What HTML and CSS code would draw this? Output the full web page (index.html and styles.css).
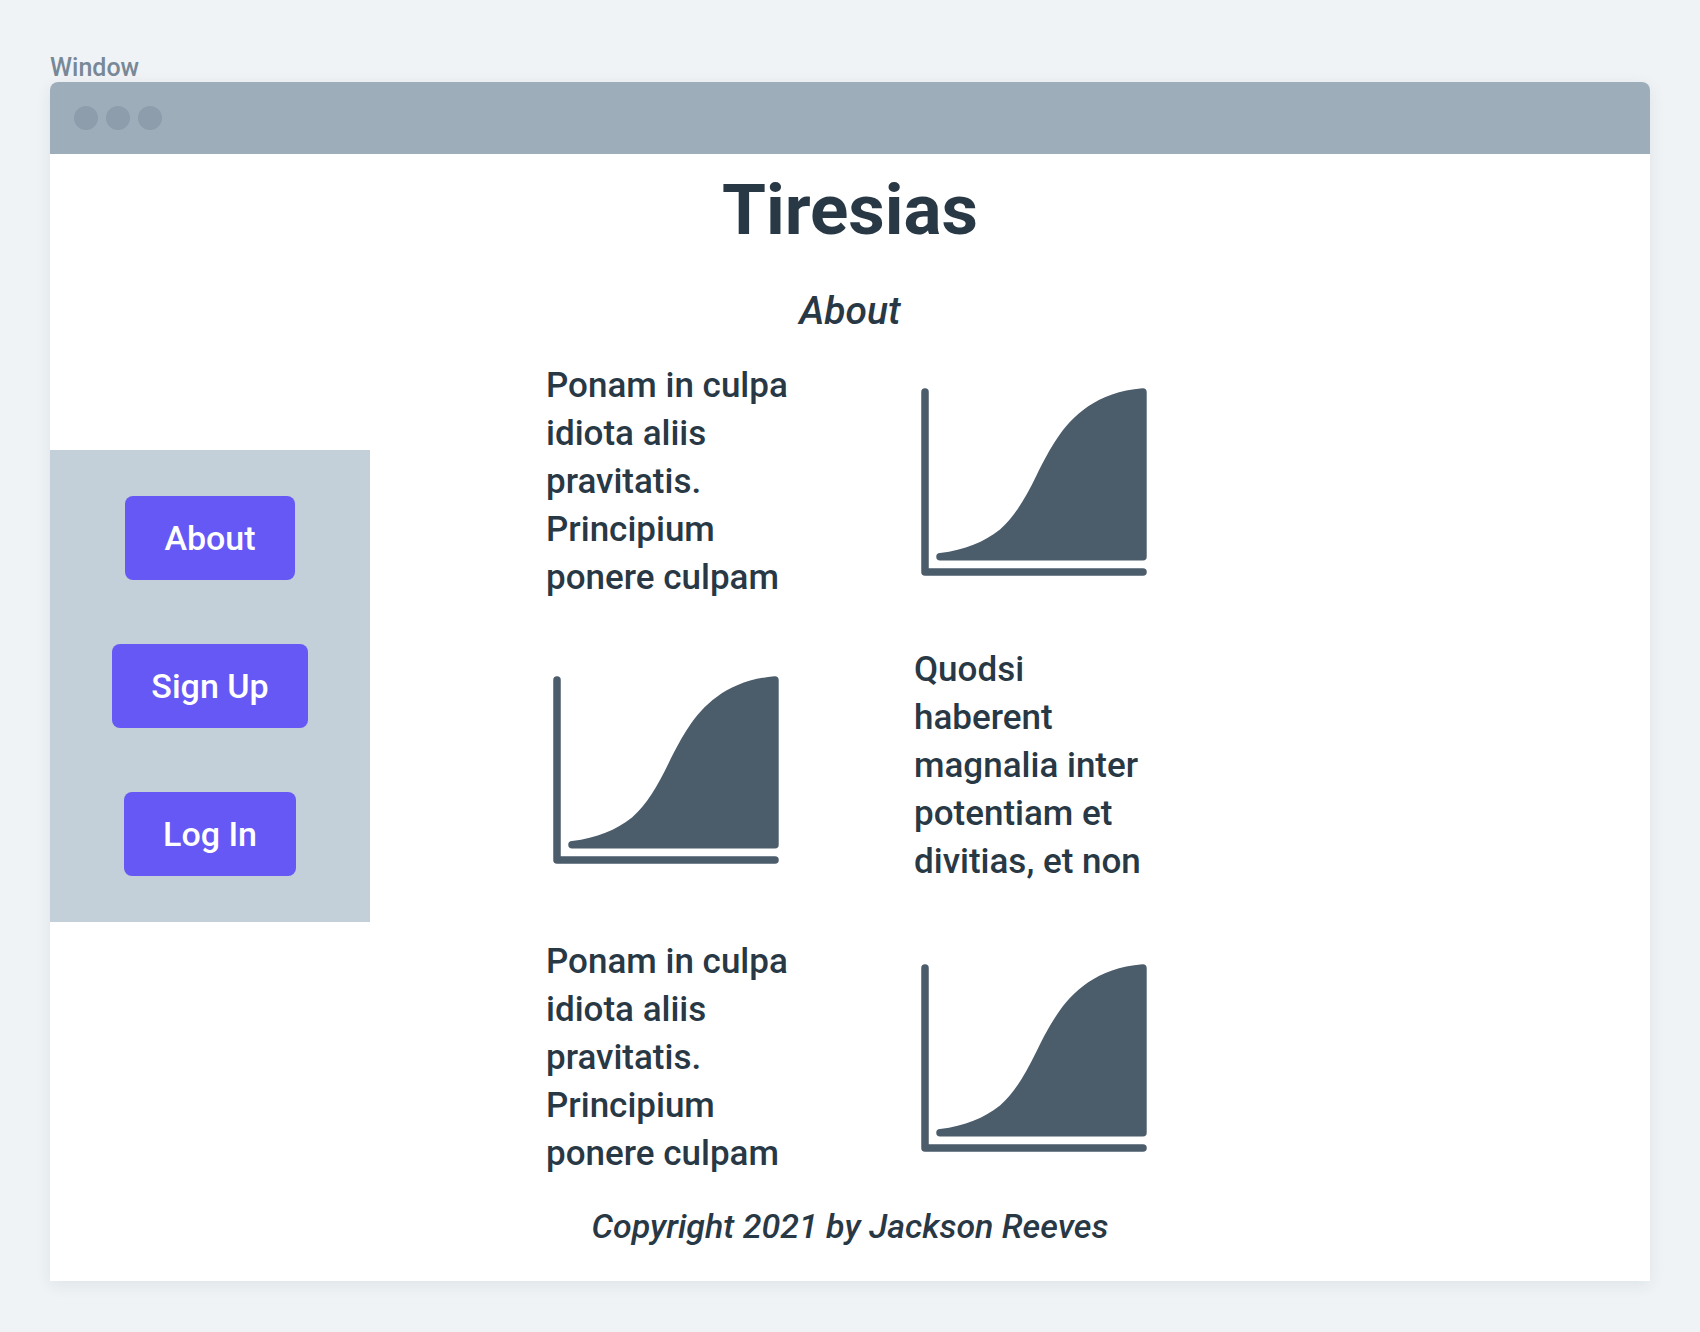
FILE: index.html
```html
<!DOCTYPE html>
<html lang="en">
<head>
  <meta charset="utf-8">
  <title>Tiresias</title>
  <link rel="stylesheet" href="styles.css">
</head>
<body>
  <svg class="defs" aria-hidden="true">
    <symbol id="area-chart" viewBox="0 0 240 240">
      <path d="M11 30V210H229" fill="none" stroke="currentColor" stroke-width="7.5" stroke-linecap="round" stroke-linejoin="round"/>
      <path fill="currentColor" d="M26 191C51 188 70 180 86 167.500C101 154 111 137 122.700 113C130 98 136 87 142.700 77C158 54 183 30 228.500 26.300A4 4 0 0 1 232.700 30V194.700A3.800 3.800 0 0 1 229 198.500H26A3.750 3.750 0 0 1 26 191Z"/>
    </symbol>
  </svg>
  <div class="label">Window</div>
  <div class="window">
    <div class="titlebar">
      <span class="dot"></span>
      <span class="dot"></span>
      <span class="dot"></span>
    </div>
    <div class="page">
      <nav class="sidebar" aria-label="Main">
        <button class="button" type="button">About</button>
        <button class="button" type="button">Sign Up</button>
        <button class="button" type="button">Log In</button>
      </nav>
      <main class="content">
        <h1 class="title">Tiresias</h1>
        <h2 class="subtitle">About</h2>
        <section class="feature">
          <p class="copy">Ponam in culpa<br>idiota aliis<br>pravitatis.<br>Principium<br>ponere culpam</p>
          <svg class="chart" role="img" aria-label="Area chart"><use href="#area-chart"/></svg>
        </section>
        <section class="feature feature-bottom">
          <svg class="chart" role="img" aria-label="Area chart"><use href="#area-chart"/></svg>
          <p class="copy">Quodsi<br>haberent<br>magnalia inter<br>potentiam et<br>divitias, et non</p>
        </section>
        <section class="feature">
          <p class="copy">Ponam in culpa<br>idiota aliis<br>pravitatis.<br>Principium<br>ponere culpam</p>
          <svg class="chart" role="img" aria-label="Area chart"><use href="#area-chart"/></svg>
        </section>
        <footer class="footer">Copyright 2021 by Jackson Reeves</footer>
      </main>
    </div>
  </div>
</body>
</html>
```
FILE: styles.css
```css
* {
  box-sizing: border-box;
}

body {
  margin: 0;
  padding: 54px 50px 48px;
  background: #eff3f6;
  color: #293845;
  font-family: Roboto, "Liberation Sans", sans-serif;
  font-size: 34px;
  font-weight: 500;
  line-height: 48px;
}

.defs {
  position: absolute;
  width: 0;
  height: 0;
}

.label {
  color: #788896;
  font-size: 25px;
  line-height: 28px;
}

.window {
  background: #fff;
  border-radius: 8px 8px 0 0;
  box-shadow: 0 4px 16px rgba(41, 56, 69, 0.08);
}

.titlebar {
  display: flex;
  align-items: center;
  gap: 8px;
  height: 72px;
  padding: 0 24px;
  background: #9eadba;
  border-radius: 8px 8px 0 0;
}

.dot {
  width: 24px;
  height: 24px;
  border-radius: 50%;
  background: #8d9dac;
}

.page {
  display: grid;
  grid-template-columns: 320px 1fr 320px;
  align-items: start;
}

.sidebar {
  display: flex;
  flex-direction: column;
  align-items: center;
  gap: 64px;
  margin-top: 296px;
  padding: 46px 0;
  background: #c3cfd9;
}

.button {
  padding: 18px 39px;
  border: 0;
  border-radius: 8px;
  background: #6558f5;
  color: #fff;
  font: inherit;
}

.content {
  display: flex;
  flex-direction: column;
  align-items: center;
  padding: 16px 0 31px;
}

.title {
  margin: 0;
  font-size: 71px;
  font-weight: 700;
  line-height: 80px;
}

.subtitle {
  margin: 37px 0 27px;
  font-size: 39px;
  font-style: italic;
  font-weight: 500;
}

.feature {
  display: grid;
  grid-template-columns: 240px 240px;
  column-gap: 128px;
}

.feature + .feature {
  margin-top: 48px;
}

/* Copy sits slightly above the chart in this row. */
.feature + .feature-bottom {
  align-items: end;
  margin-top: 44px;
}

.feature-bottom .copy {
  padding-bottom: 4px;
}

.copy {
  margin: 0;
  font-size: 35px;
  white-space: nowrap;
}

.chart {
  display: block;
  width: 240px;
  height: 240px;
  color: #4b5c6b;
}

.footer {
  margin-top: 24px;
  font-style: italic;
}
```
